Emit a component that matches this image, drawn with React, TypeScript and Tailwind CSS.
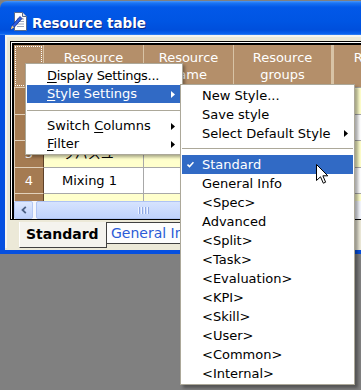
import React from "react";

type Row = { n: string; h: string; bg: string; c1: string };

const rows: Row[] = [
  { n: "1", h: "h-[27px]", bg: "bg-[#ffffcc]", c1: "Mixing 2" },
  { n: "2", h: "h-[26px]", bg: "bg-white", c1: "Filling 1" },
  { n: "3", h: "h-[27px]", bg: "bg-[#ffffcc]", c1: "ワバスユ" },
  { n: "4", h: "h-[26px]", bg: "bg-white", c1: "Mixing 1" },
  { n: "", h: "h-[26px]", bg: "bg-[#ffffcc]", c1: "" },
];

function Arrow({ white }: { white?: boolean }) {
  return (
    <svg width="4" height="7" viewBox="0 0 4 7" className={white ? "fill-white" : "fill-black"}>
      <path d="M0 0L4 3.5L0 7Z" />
    </svg>
  );
}

function Label({ pre, u, post }: { pre?: string; u?: string; post?: string }) {
  return (
    <span className="whitespace-nowrap">
      {pre}
      {u ? <span className="underline underline-offset-[2px]">{u}</span> : null}
      {post}
    </span>
  );
}

function TitleIcon() {
  return (
    <svg width="18" height="19" viewBox="0 0 18 19">
      <path d="M4.5 0.5H12.5L16.5 4.5V18.5H4.5Z" fill="#ffffff" stroke="#5a6b8c" />
      <path d="M12.5 0.5V4.5H16.5" fill="#dfe6f2" stroke="#5a6b8c" />
      <path d="M7 7H14M7 9.5H14M7 12H14M7 14.5H14" stroke="#9aa6bd" />
      <path d="M0.8 17.5L2 13.5L10 4.5L12 6.5L4 15.5Z" fill="#2f5fe0" stroke="#142a8a" strokeWidth="0.8" />
      <path d="M0.8 17.5L2 13.5L4 15.5Z" fill="#f1d18a" />
    </svg>
  );
}

function Cursor() {
  return (
    <svg width="13" height="21" viewBox="0 0 13 21" className="absolute left-[316px] top-[164px]">
      <path
        d="M0.5 0.5V16.5L4.5 12.8L7.3 19.2L9.6 18.2L6.9 11.8H11.8Z"
        fill="#ffffff"
        stroke="#000000"
        strokeWidth="1"
      />
    </svg>
  );
}

function Check({ white }: { white?: boolean }) {
  return (
    <svg width="7" height="7" viewBox="0 0 7 7" className={white ? "stroke-white" : "stroke-black"}>
      <path d="M0.5 3.5L2.5 5.5L6.5 1.2" fill="none" strokeWidth="1.6" />
    </svg>
  );
}

function ContextMenu() {
  return (
    <div className="absolute left-[25px] top-[63px] w-[158px] border border-[#aca899] bg-white px-px pt-[3px] pb-px shadow-[2px_2px_3px_rgba(0,0,0,0.35)]">
      <div className="flex h-[18px] items-center pl-[20px] tracking-[-0.3px]">
        <Label u="D" post="isplay Settings..." />
      </div>
      <div className="flex h-[18px] items-center justify-between bg-[#316ac5] pl-[20px] pr-[6px] text-white">
        <Label u="S" post="tyle Settings" />
        <Arrow white />
      </div>
      <div className="flex h-[14px] flex-col pt-[7px]">
        <div className="h-px bg-[#aca899]" />
      </div>
      <div className="flex h-[18px] items-center justify-between pl-[20px] pr-[6px]">
        <Label pre="Switch " u="C" post="olumns" />
        <Arrow />
      </div>
      <div className="flex h-[18px] items-center justify-between pl-[20px] pr-[6px]">
        <Label u="F" post="ilter" />
        <Arrow />
      </div>
    </div>
  );
}

const styles = [
  "General Info",
  "<Spec>",
  "Advanced",
  "<Split>",
  "<Task>",
  "<Evaluation>",
  "<KPI>",
  "<Skill>",
  "<User>",
  "<Common>",
  "<Internal>",
];

function SubMenu() {
  return (
    <div className="absolute left-[180px] top-[84px] w-[175px] border border-[#aca899] bg-white px-px py-px shadow-[3px_3px_3px_rgba(0,0,0,0.35)]">
      <div className="flex h-[19px] items-center pl-[20px]">
        <Label pre="New Style..." />
      </div>
      <div className="flex h-[19px] items-center pl-[20px]">
        <Label pre="Save style" />
      </div>
      <div className="flex h-[19px] items-center justify-between pl-[20px] pr-[5px]">
        <Label pre="Select Default Style" />
        <Arrow />
      </div>
      <div className="flex h-[12px] flex-col pt-[5px]">
        <div className="h-px bg-[#aca899]" />
      </div>
      <div className="flex h-[19px] items-center bg-[#316ac5] pl-[5px] text-white">
        <Check white />
        <span className="ml-[8px] whitespace-nowrap">Standard</span>
      </div>
      {styles.map((s) => (
        <div key={s} className="flex h-[19px] items-center pl-[20px]">
          <span className="whitespace-nowrap">{s}</span>
        </div>
      ))}
    </div>
  );
}

function HeaderCell({ w, l1, l2, extra }: { w: string; l1: string; l2: string; extra?: string }) {
  return (
    <div
      className={`${w} ${extra ?? ""} flex h-full shrink-0 flex-col items-center border-r border-[#d8c3a5] pt-[4px] leading-[17px] text-white`}
    >
      <span className="whitespace-nowrap">{l1}</span>
      <span className="whitespace-nowrap">{l2}</span>
    </div>
  );
}

function Grid() {
  return (
    <div className="h-[156px] overflow-hidden">
      <div className="flex h-[42px] bg-[#b48f6a]">
        <div className="flex h-full w-[30px] shrink-0 border-r border-[#d8c3a5] p-px">
          <div className="h-full w-full border border-dotted border-white" />
        </div>
        <HeaderCell w="w-[100px]" l1="Resource" l2="code" />
        <HeaderCell w="w-[90px]" l1="Resource" l2="name" />
        <HeaderCell w="w-[100px]" l1="Resource" l2="groups" extra="border-r-[3px]" />
        <HeaderCell w="w-[100px]" l1="Resource" l2="type" />
      </div>
      {rows.map((r, i) => (
        <div key={i} className={`flex ${r.h}`}>
          <div className="flex h-full w-[30px] shrink-0 items-center justify-center border-t border-l border-r border-t-[#e2d1bb] border-l-[#e2d1bb] border-r-[#5e4128] bg-[#a57b52] text-white">
            {r.n}
          </div>
          <div className={`flex h-full w-[100px] shrink-0 items-center border-t border-r border-[#a8a8a8] pl-[18px] ${r.bg}`}>
            <span className="whitespace-nowrap">{r.c1}</span>
          </div>
          <div className={`h-full w-[90px] shrink-0 border-t border-r border-[#a8a8a8] ${r.bg}`} />
          <div className={`h-full w-[100px] shrink-0 border-t border-r border-[#a8a8a8] ${r.bg}`} />
          <div className={`h-full w-[100px] shrink-0 border-t border-r border-[#a8a8a8] ${r.bg}`} />
        </div>
      ))}
    </div>
  );
}

function Scrollbar() {
  return (
    <div className="flex h-[18px] bg-[#f4f6fc]">
      <div className="flex h-full w-[19px] items-center justify-center rounded-[2px] border border-[#b4c7f3] bg-[linear-gradient(to_bottom,#dde7fe,#bdd0fb)]">
        <svg width="6" height="8" viewBox="0 0 6 8">
          <path d="M4.8 0.8L1.5 4L4.8 7.2" fill="none" stroke="#4d6185" strokeWidth="1.8" />
        </svg>
      </div>
      <div className="ml-[3px] flex h-full w-[214px] items-center justify-center gap-[2px] rounded-[2px] border border-[#aec3f4] bg-[linear-gradient(to_bottom,#d6e3fe,#c0d3fc)]">
        <div className="h-[7px] w-px bg-[#eef3ff] shadow-[1px_0_0_#8fa9e4]" />
        <div className="h-[7px] w-px bg-[#eef3ff] shadow-[1px_0_0_#8fa9e4]" />
        <div className="h-[7px] w-px bg-[#eef3ff] shadow-[1px_0_0_#8fa9e4]" />
        <div className="h-[7px] w-px bg-[#eef3ff] shadow-[1px_0_0_#8fa9e4]" />
      </div>
    </div>
  );
}

function Window() {
  return (
    <div className="mt-px flex w-[430px] flex-col">
      <div className="flex h-[34px] items-start rounded-tl-[7px] bg-[linear-gradient(to_bottom,#4a97fb_0%,#1a74f4_6%,#0258e8_18%,#0055e3_60%,#004fdc_85%,#0a62ee_96%,#3a86f4_100%)]">
        <div className="ml-[10px] mt-[11px]">
          <TitleIcon />
        </div>
        <span className="ml-[4px] mt-[14px] whitespace-nowrap text-[13.5px] leading-[17px] font-bold text-white [text-shadow:1px_1px_0_#0b2a84]">
          Resource table
        </span>
      </div>
      <div className="flex h-[219px] flex-col border-l-[5px] border-b-[4px] border-[#0650e0] bg-[#ece9d8]">
        <div className="flex flex-col border-t-2 border-l-2 border-[#f6f5f0] pt-[4px] pl-[3px]">
          <div className="border-t border-l border-b border-black">
            <div className="border-t border-l border-white">
              <div className="border-t-2 border-l-2 border-black">
                <Grid />
                <Scrollbar />
              </div>
            </div>
          </div>
          <div className="ml-[9px] mt-[2px] flex items-start">
            <div className="flex h-[26px] w-[88px] items-center border-l border-r border-b border-l-[#ffffff] border-r-[#404040] border-b-[#404040] bg-[#f4f3ee] pl-[6px] text-[14px] font-bold text-black">
              Standard
            </div>
            <div className="flex h-[22px] w-[120px] items-center border-t border-b border-[#404040] bg-[#fdfdfd] pl-[4px] text-[14px] text-[#2a5bd7]">
              <span className="whitespace-nowrap">General Info</span>
            </div>
          </div>
        </div>
      </div>
    </div>
  );
}

export default function App() {
  return (
    <div className="relative h-[390px] w-[361px] overflow-hidden bg-[#808080] font-['DejaVu_Sans','Noto_Sans_CJK_JP',sans-serif] text-[13px] text-black">
      <Window />
      <ContextMenu />
      <SubMenu />
      <Cursor />
    </div>
  );
}
